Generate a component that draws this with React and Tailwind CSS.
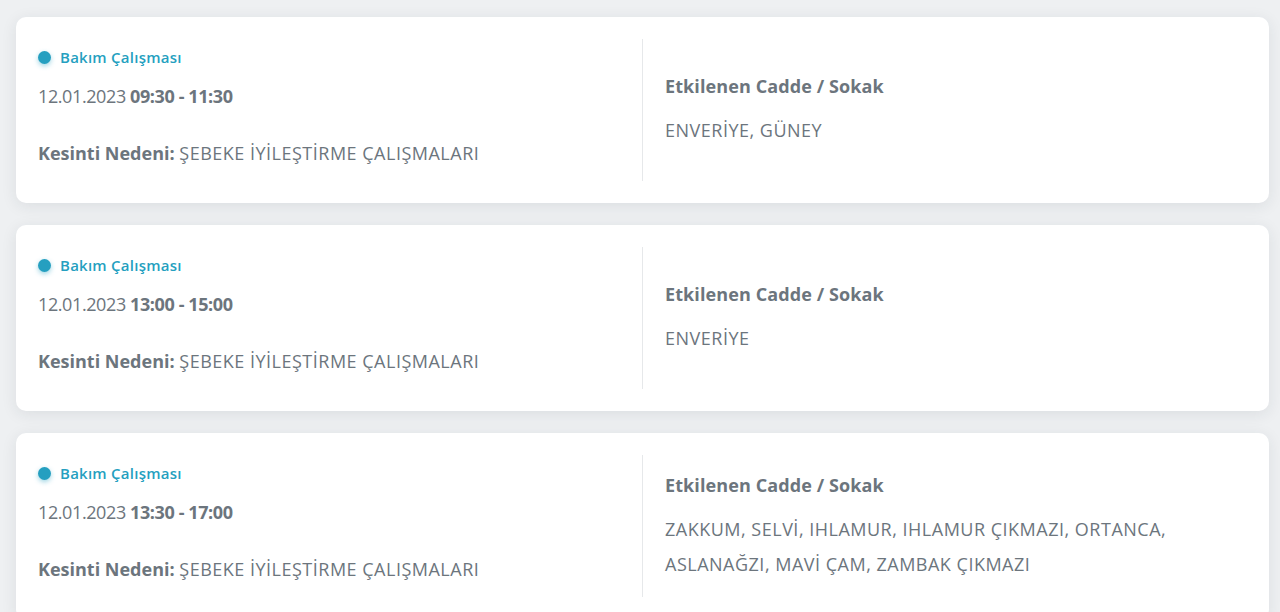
import React from "react";

const items = [
  { time: "09:30 - 11:30", streets: ["ENVERİYE, GÜNEY"] },
  { time: "13:00 - 15:00", streets: ["ENVERİYE"] },
  {
    time: "13:30 - 17:00",
    streets: ["ZAKKUM, SELVİ, IHLAMUR, IHLAMUR ÇIKMAZI, ORTANCA,", "ASLANAĞZI, MAVİ ÇAM, ZAMBAK ÇIKMAZI"],
  },
];

function Card({ item }) {
  return (
    <div className="shrink-0 bg-white rounded-[10px] shadow-[0_3px_16px_rgba(30,40,60,0.09)] flex py-[22px] h-[186px]">
      <div className="w-[626px] pl-[22px] flex flex-col">
        <div className="flex items-center h-[36px]">
          <span className="w-[13px] h-[13px] rounded-full bg-[#259fc0] shadow-[0_2px_5px_rgba(37,159,192,0.45)]" />
          <span className="ml-[9px] text-[15px] font-semibold text-[#259fc0] tracking-[0.25px]">Bakım Çalışması</span>
        </div>
        <div className="mt-[3px] text-[18px] text-[#6c757d] leading-[36px] tracking-[-0.4px]">
          12.01.2023 <span className="font-bold">{item.time}</span>
        </div>
        <div className="mt-[21px] text-[18px] text-[#6c757d] leading-[36px]">
          <span className="font-bold">Kesinti Nedeni:</span>{" "}
          <span className="tracking-[0.5px]">ŞEBEKE İYİLEŞTİRME ÇALIŞMALARI</span>
        </div>
      </div>
      <div className="border-l border-[#e6e8ea] flex-1 pl-[22px] pb-[4px] flex flex-col justify-center">
        <div className="text-[18px] font-bold text-[#6c757d] leading-[36px] tracking-[0.1px]">Etkilenen Cadde / Sokak</div>
        <div className="mt-[9px] text-[18px] text-[#6c757d] leading-[35px] tracking-[0.5px]">
          {item.streets.map((s, i) => (
            <div key={i}>{s}</div>
          ))}
        </div>
      </div>
    </div>
  );
}

export default function App() {
  return (
    <div
      className="w-[1280px] h-[612px] overflow-hidden bg-[#eef0f2] pl-[16px] pr-[11px] pt-[17px] flex flex-col gap-[22px]"
      style={{ fontFamily: "'Open Sans', 'Noto Sans', sans-serif" }}
    >
      {items.map((it, i) => (
        <Card key={i} item={it} />
      ))}
    </div>
  );
}
